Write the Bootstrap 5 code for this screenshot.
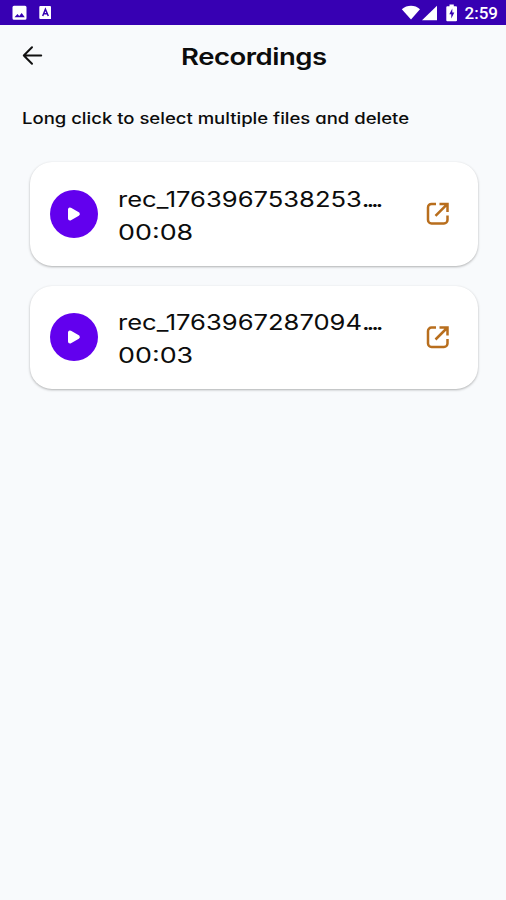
<!DOCTYPE html>
<html lang="en">
<head>
<meta charset="utf-8">
<meta name="viewport" content="width=device-width, initial-scale=1">
<title>Recordings</title>
<link href="https://cdn.jsdelivr.net/npm/bootstrap@5.3.0/dist/css/bootstrap.min.css" rel="stylesheet">
<style>
body { background: #f8fafc; color: #0c0c0c; font-family: Inter, "Liberation Sans", sans-serif; font-feature-settings: "cv11"; }
svg { display: block; flex: none; }
.status { height: 25px; background: #3700b3; padding: 0 8px 0 12px; }
.clock { font: 500 17px/25px Roboto, sans-serif; padding-top: 1px; }
.topbar { height: 61px; padding: 0 42px 0 20px; }
.topbar h1 { padding-bottom: 2px; }
.wide { display: inline-block; white-space: nowrap; transform-origin: 0 50%; }
.title { font-size: 23px; font-weight: 600; line-height: 26px; letter-spacing: -.4px; transform: scaleX(1.195); transform-origin: 50% 50%; }
.hint-row { padding: 23px 0 0 22px; }
.hint { font-size: 15.3px; font-weight: 500; line-height: 20px; transform: scaleX(1.21); }
.recordings { padding: 33px 28px 40px 30px; gap: 20px; }
.recording { height: 103.5px; border: 0; border-radius: 22px; padding: 0 27px 0 20px; box-shadow: 0 1px 2.5px rgba(0,0,0,.3); }
.play { width: 48px; height: 48px; background: #6200ee; }
.details { margin-left: 20px; padding-top: 4px; line-height: 33px; font-size: 21px; }
.file { transform: scaleX(1.218); }
.dots { letter-spacing: -2.6px; font-weight: 500; }
.time { transform: scaleX(1.28); }
</style>
</head>
<body class="min-vh-100">
<header>
  <div class="status d-flex align-items-center justify-content-between text-white">
    <div class="d-flex align-items-center gap-2">
      <svg width="16" height="16" viewBox="0 0 16 16"><path fill="#fff" fill-rule="evenodd" d="M2 .7h11a1.500 1.500 0 0 1 1.500 1.500v11a1.500 1.500 0 0 1-1.500 1.500H2A1.500 1.500 0 0 1 .5 13.200v-11A1.500 1.500 0 0 1 2 .7ZM2.500 12.200h10.300L9.700 7.900 7.200 11 5.500 9Z"/></svg>
      <svg width="18" height="16" viewBox="-3 0 18 16"><path fill="#fff" fill-rule="evenodd" d="M1.300 1h9.700a1 1 0 0 1 1 1v12H1.300A1 1 0 0 1 .3 13V2a1 1 0 0 1 1-1Z"/><path d="M3.700 11 6.400 4.300 9.300 11M4.800 8.800h3.500" fill="none" stroke="#3700b3" stroke-width="1.500"/></svg>
    </div>
    <div class="d-flex align-items-center">
      <svg width="19" height="15" viewBox="0 0 19 15"><path fill="#fff" d="M.8 4.200C6.200-.4 13.800-.4 19 4.200L10 14.500Z"/></svg>
      <svg width="17" height="16" viewBox="0 0 17 16"><path fill="#fff" d="M17 .8v14.400H2Z"/></svg>
      <svg class="ms-2" width="12" height="18" viewBox="0 0 12 18"><path fill="#fff" d="M2.300 2.200H4.500V.5h4.300v1.700H11a1 1 0 0 1 1 1v13a1 1 0 0 1-1 1H2.300a1 1 0 0 1-1-1v-13a1 1 0 0 1 1-1Z"/><path fill="#3700b3" d="M7.300 4.500 4.300 10.300h2v4.200l3-6H7.300Z"/></svg>
      <span class="clock ms-1 ps-1">2:59</span>
    </div>
  </div>
  <div class="topbar d-flex align-items-center">
    <svg width="24" height="24" viewBox="0 0 24 24" fill="none" stroke="#111" stroke-width="2" stroke-linecap="round" stroke-linejoin="round"><path d="M12 3.300 3.800 11.500l8.200 8.200M3.800 11.500h17.400"/></svg>
    <h1 class="flex-grow-1 text-center mb-0"><span class="wide title">Recordings</span></h1>
  </div>
</header>
<main>
  <p class="hint-row mb-0 d-flex"><span class="wide hint">Long click to select multiple files and delete</span></p>
  <div class="recordings d-flex flex-column">
    <article class="recording card flex-row align-items-center">
      <div class="play rounded-circle d-flex align-items-center justify-content-center">
        <svg width="16" height="18" viewBox="0 0 16 18"><path d="M4 4.500v9L11.800 9Z" fill="#fff" stroke="#fff" stroke-width="4" stroke-linejoin="round"/></svg>
      </div>
      <div class="details d-flex flex-column align-items-start flex-grow-1">
        <span class="wide file">rec_1763967538253<span class="dots">....</span></span><span class="wide time">00:08</span>
      </div>
      <svg width="26" height="26" viewBox="0 .6 26 26" fill="none" stroke="#b86e1d" stroke-width="2.500"><path d="M11 3.500H6.500a3.500 3.500 0 0 0-3.500 3.500v12.500A3.500 3.500 0 0 0 6.500 23h12.500a3.500 3.500 0 0 0 3.500-3.500V15M10.500 15.500 22 4M14.500 3.500h8v8"/></svg>
    </article>
    <article class="recording card flex-row align-items-center">
      <div class="play rounded-circle d-flex align-items-center justify-content-center">
        <svg width="16" height="18" viewBox="0 0 16 18"><path d="M4 4.500v9L11.800 9Z" fill="#fff" stroke="#fff" stroke-width="4" stroke-linejoin="round"/></svg>
      </div>
      <div class="details d-flex flex-column align-items-start flex-grow-1">
        <span class="wide file">rec_1763967287094<span class="dots">....</span></span><span class="wide time">00:03</span>
      </div>
      <svg width="26" height="26" viewBox="0 0 26 26" fill="none" stroke="#b86e1d" stroke-width="2.500"><path d="M11 3.500H6.500a3.500 3.500 0 0 0-3.500 3.500v12.500A3.500 3.500 0 0 0 6.500 23h12.500a3.500 3.500 0 0 0 3.500-3.500V15M10.500 15.500 22 4M14.500 3.500h8v8"/></svg>
    </article>
  </div>
</main>
<script src="https://cdn.jsdelivr.net/npm/bootstrap@5.3.0/dist/js/bootstrap.bundle.min.js"></script>
</body>
</html>
